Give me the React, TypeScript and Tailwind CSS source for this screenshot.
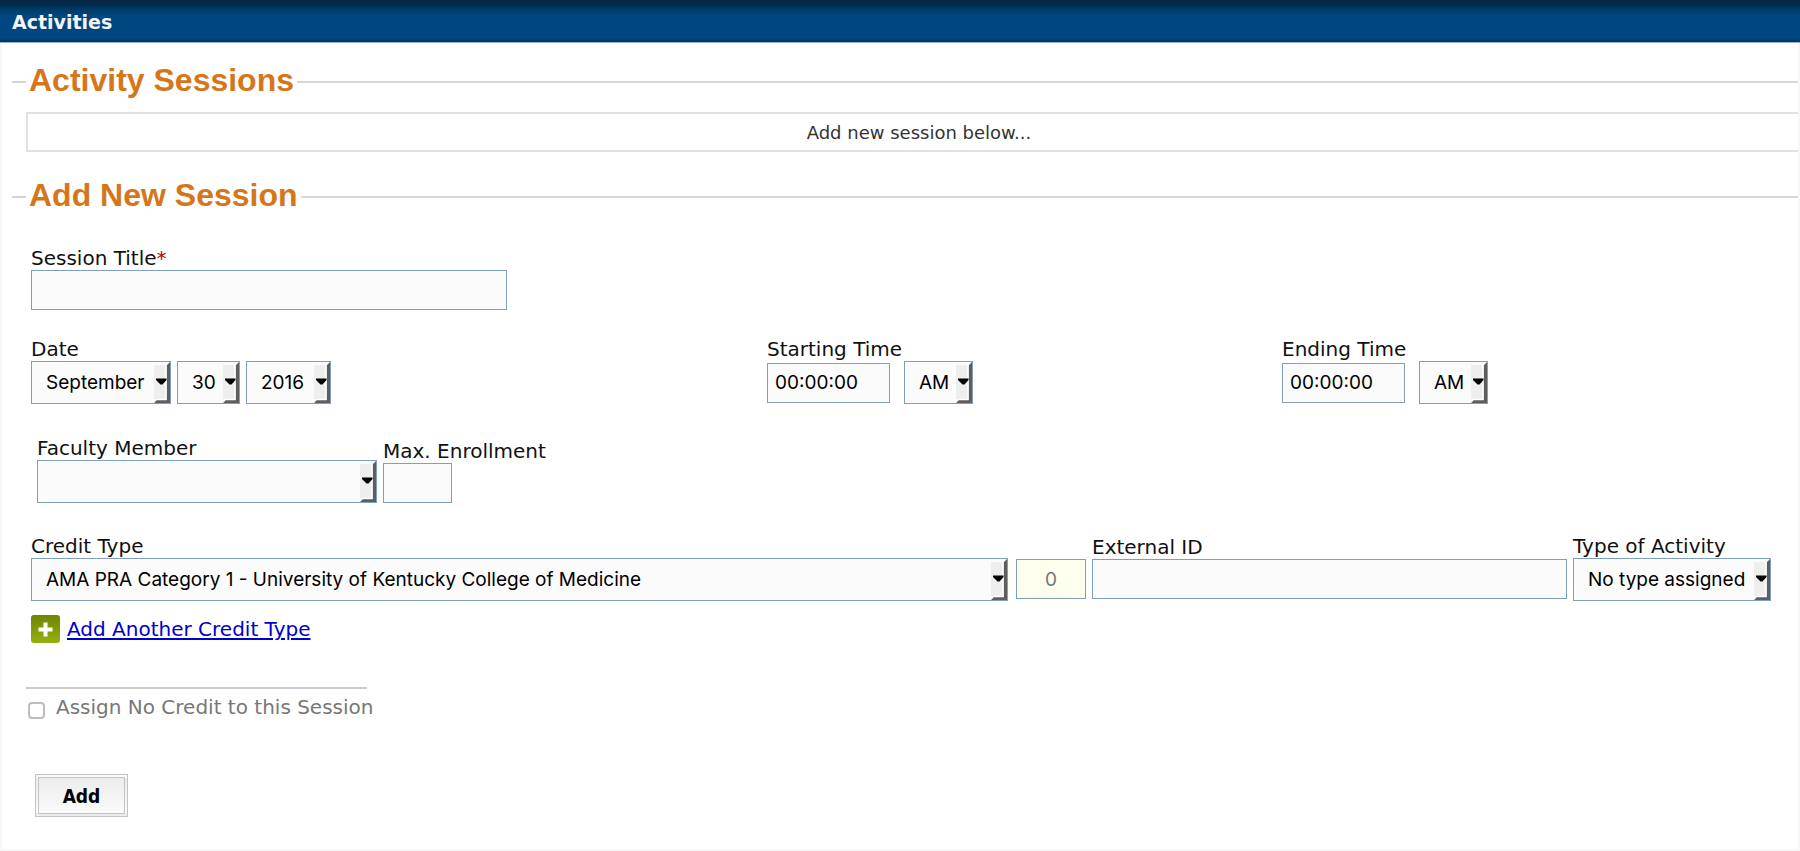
import { useId } from 'react';
import type { ReactNode } from 'react';

function SelectArrow() {
  return (
    <svg
      aria-hidden="true"
      viewBox="0 0 16 41"
      className="pointer-events-none absolute right-px top-px h-[41px] w-4"
    >
      <rect x="0" y="3" width="12" height="34" fill="#eeeeee" />
      <path d="M16 0 L12.500 3.500 V38 H3 L0 41 H16 Z" fill="#5e5e5e" />
      <path d="M12 3 V37.500 H3" fill="none" stroke="#ffffff" strokeWidth="1.500" />
      <path d="M2 16.500 H12.500 V18 L8.500 22.500 H6.500 L2 18 Z" fill="#000000" />
    </svg>
  );
}

type SelectProps = { id?: string; label: string; options: string[]; width: string };

function Select({ id, label, options, width }: SelectProps) {
  return (
    <div className={`relative ${width}`}>
      <select
        id={id}
        aria-label={id ? undefined : label}
        className="block h-[43px] w-full appearance-none rounded-none border border-[#7f9fbf] bg-[#fbfbfb] pl-[14px] font-['Inter',sans-serif] text-[19px] leading-6 text-black"
      >
        {options.map((o) => (
          <option key={o}>{o}</option>
        ))}
      </select>
      <SelectArrow />
    </div>
  );
}

function Label({ htmlFor, children }: { htmlFor: string; children: ReactNode }) {
  return (
    <label htmlFor={htmlFor} className="block whitespace-nowrap text-[20px] leading-6 text-[#111]">
      {children}
    </label>
  );
}

const inputClass =
  "block h-10 rounded-none border border-[#7f9fbf] bg-[#fbfbfb] px-[7px] font-['Inter',sans-serif] text-[19px] leading-6 text-black";

function SelectField({ label, options, width }: { label: string; options: string[]; width: string }) {
  const id = useId();
  return (
    <div className={width}>
      <Label htmlFor={id}>{label}</Label>
      <Select id={id} label={label} options={options} width="w-full" />
    </div>
  );
}

function TimeField({ label }: { label: string }) {
  const id = useId();
  return (
    <div>
      <Label htmlFor={id}>{label}</Label>
      <div className="flex items-center gap-[14px]">
        <input id={id} defaultValue="00:00:00" className={`${inputClass} w-[123px]`} />
        <Select label={`${label} period`} options={['AM', 'PM']} width="w-[69px]" />
      </div>
    </div>
  );
}

function SectionHeading({ children }: { children: ReactNode }) {
  return (
    <div className="flex items-center gap-[3px]">
      <span className="h-0.5 w-[14px] bg-[#d4d4d4]" />
      <h2 className="pb-1 font-['Liberation_Sans',Arial,sans-serif] text-[32px] font-bold leading-9 text-[#d6761a]">
        {children}
      </h2>
      <span className="h-0.5 flex-1 bg-[#d8d8d8]" />
    </div>
  );
}

export default function App() {
  return (
    <div className="flex min-h-screen flex-col bg-white font-['DejaVu_Sans',Verdana,sans-serif]">
      <header className="flex h-[43px] items-center border-b border-[#9fb0cb] bg-[linear-gradient(to_bottom,#14203f_0px,#002b4b_2px,#002b4b_5px,#003d6c_10px,#004680_16px,#004680_39px,#003468_41px)] px-3 pt-0.5">
        <h1 className="text-[19px] font-bold leading-6 text-[#f4f4f4]">Activities</h1>
      </header>

      <main className="flex-1 border-x-2 border-b-2 border-[#f7f7f7] pb-6 pl-[10px] pt-[19px]">
        <section>
          <SectionHeading>Activity Sessions</SectionHeading>
          <div className="ml-[14px] mt-[10px] flex h-10 items-center justify-center border-2 border-r-0 border-[#e2e2e2] pl-3 pt-0.5 text-[18px] leading-6 text-[#333]">
            Add new session below...
          </div>
        </section>

        <section className="mt-[25px]">
          <SectionHeading>Add New Session</SectionHeading>
          <form className="ml-[19px] mr-[27px] mt-[29px]" onSubmit={(e) => e.preventDefault()}>
            <Label htmlFor="title">
              Session Title<span className="text-[#c00000]">*</span>
            </Label>
            <input id="title" className={`${inputClass} w-[476px]`} />

            <div className="mt-[27px] grid grid-cols-[736fr_515fr_489fr]">
              <div>
                <Label htmlFor="month">Date</Label>
                <div className="flex gap-[6px]">
                  <Select id="month" label="Month" options={['September', 'October', 'November']} width="w-[140px]" />
                  <Select label="Day" options={['30', '29', '28']} width="w-[63px]" />
                  <Select label="Year" options={['2016', '2017', '2018']} width="w-[85px]" />
                </div>
              </div>
              <TimeField label="Starting Time" />
              <TimeField label="Ending Time" />
            </div>

            <div className="ml-[6px] mt-8 flex items-end gap-[6px]">
              <SelectField label="Faculty Member" options={['']} width="w-[340px]" />
              <div className="w-[69px]">
                <Label htmlFor="max">Max. Enrollment</Label>
                <input id="max" className={`${inputClass} w-full`} />
              </div>
            </div>

            <div className="mt-[31px] flex items-end gap-[6px]">
              <SelectField
                label="Credit Type"
                options={['AMA PRA Category 1 - University of Kentucky College of Medicine']}
                width="flex-[977]"
              />
              <input
                aria-label="Credits"
                defaultValue="0"
                className="mb-0.5 ml-0.5 h-10 w-[70px] rounded-none border border-[#7f9fbf] bg-[#ffffee] text-center font-['Inter',sans-serif] text-[19px] leading-6 text-[#777]"
              />
              <div className="mb-0.5 flex-[475]">
                <Label htmlFor="external">External ID</Label>
                <input id="external" className={`${inputClass} w-full`} />
              </div>
              <SelectField label="Type of Activity" options={['No type assigned']} width="w-[198px]" />
            </div>

            <a href="#credit" className="mt-[14px] inline-flex items-center gap-[7px] text-[20px] leading-7 text-[#0000cc]">
              <svg viewBox="0 0 29 28" className="h-7 w-[29px]" aria-hidden="true">
                <defs>
                  <linearGradient id="plus" x1="0" y1="0" x2="0" y2="1">
                    <stop offset="0" stopColor="#6f8500" />
                    <stop offset="1" stopColor="#95b010" />
                  </linearGradient>
                </defs>
                <rect width="29" height="28" rx="3" fill="url(#plus)" />
                <path d="M14.500 7.500 V21.500 M7.500 14.500 H21.500" stroke="#fff" strokeWidth="4" />
              </svg>
              <span className="underline decoration-2 underline-offset-2">Add Another Credit Type</span>
            </a>

            <div className="-ml-[5px] mt-[37px] flex w-[341px] items-center gap-[11px] border-t-2 border-[#cccccc] pl-0.5 pt-[6px]">
              <input
                id="nocredit"
                type="checkbox"
                className="mt-[6px] size-[17px] shrink-0 appearance-none rounded-[4px] border-2 border-[#bdbdbd] bg-white"
              />
              <label htmlFor="nocredit" className="whitespace-nowrap text-[20px] leading-6 text-[#777]">
                Assign No Credit to this Session
              </label>
            </div>

            <button
              type="submit"
              className="ml-1 mt-[55px] block h-[43px] w-[93px] border-4 border-double border-[#c3c3c3] bg-linear-to-b from-[#ececec] to-[#fbfbfb] font-['DejaVu_Sans_Condensed','DejaVu_Sans',sans-serif] text-[19px] font-bold leading-6 text-black"
            >
              Add
            </button>
          </form>
        </section>
      </main>
    </div>
  );
}
